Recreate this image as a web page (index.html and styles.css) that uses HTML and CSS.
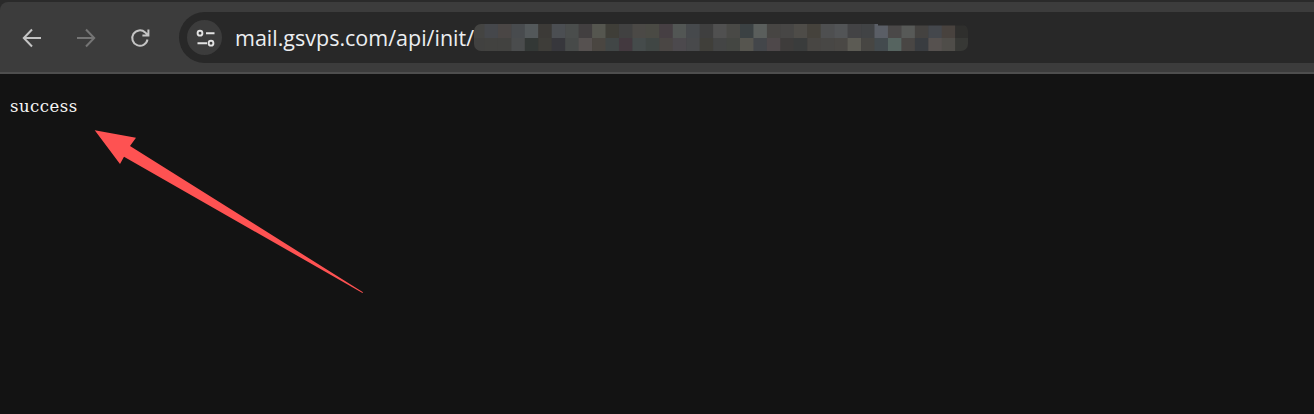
FILE: index.html
```html
<!DOCTYPE html>
<html lang="en">
<head>
<meta charset="utf-8">
<title>success</title>
<link rel="stylesheet" href="styles.css">
</head>
<body>
<header class="chrome">
  <div class="toolbar">
    <nav class="nav">
      <svg class="nav-icon back" viewBox="0 0 20 20"><path d="M19 10H2.5M10 1.5L1.8 10l8.2 8.5"/></svg>
      <svg class="nav-icon forward" viewBox="0 0 20 20"><path d="M1 10H17.5M10 1.5L18.2 10 10 18.5"/></svg>
      <svg class="nav-icon reload" viewBox="0 0 20 20"><path d="M17.5 11.5A7.7 7.7 0 1 1 15.2 4.4L18 7.2M18.4 1.6V7.6H12.4"/></svg>
    </nav>
    <div class="omnibox">
      <span class="tune">
        <svg viewBox="0 0 20 20"><circle cx="5" cy="5.2" r="2.4"/><path d="M11 5.2H19.5M2.5 15.2H12"/><circle cx="16" cy="15.2" r="2.4"/></svg>
      </span>
      <span class="url">mail.gsvps.com/api/init/</span>
      <svg class="mosaic" viewBox="0 0 497 27" aria-hidden="true">
        <defs><clipPath id="mosaic-clip"><rect x="3" y="0" width="494" height="27" rx="7"/></clipPath></defs>
        <g clip-path="url(#mosaic-clip)">
          <g class="top-row">
            <rect x="0" y="0" width="14" height="14" fill="#444442"/><rect x="13.45" y="0" width="14" height="14" fill="#45474b"/><rect x="26.9" y="0" width="14" height="14" fill="#4a4645"/><rect x="40.35" y="0" width="14" height="14" fill="#484b4e"/><rect x="53.8" y="0" width="14" height="14" fill="#53585a"/><rect x="67.25" y="0" width="14" height="14" fill="#3c3a37"/><rect x="80.7" y="0" width="14" height="14" fill="#4b4e52"/><rect x="94.15" y="0" width="14" height="14" fill="#4a4d4c"/><rect x="107.6" y="0" width="14" height="14" fill="#423f40"/><rect x="121.05" y="0" width="14" height="14" fill="#55564f"/><rect x="134.5" y="0" width="14" height="14" fill="#3f3e38"/><rect x="147.95" y="0" width="14" height="14" fill="#414141"/>
            <rect x="161.4" y="0" width="14" height="14" fill="#4b4946"/><rect x="174.85" y="0" width="14" height="14" fill="#4a4a44"/><rect x="188.3" y="0" width="14" height="14" fill="#463f43"/><rect x="201.75" y="0" width="14" height="14" fill="#525654"/><rect x="215.2" y="0" width="14" height="14" fill="#46494c"/><rect x="228.65" y="0" width="14" height="14" fill="#3f3f3f"/><rect x="242.1" y="0" width="14" height="14" fill="#505050"/><rect x="255.55" y="0" width="14" height="14" fill="#494946"/><rect x="269" y="0" width="14" height="14" fill="#3b4143"/><rect x="282.45" y="0" width="14" height="14" fill="#5a5e5c"/><rect x="295.9" y="0" width="14" height="14" fill="#474543"/><rect x="309.35" y="0" width="14" height="14" fill="#474645"/><rect x="322.8" y="0" width="14" height="14" fill="#4e4c48"/>
            <rect x="336.25" y="0" width="14" height="14" fill="#45423c"/><rect x="349.7" y="0" width="14" height="14" fill="#4e4f50"/><rect x="363.15" y="0" width="14" height="14" fill="#525456"/><rect x="376.6" y="0" width="14" height="14" fill="#434345"/><rect x="390.05" y="0" width="14" height="14" fill="#414345"/><rect x="403.5" y="0" width="14" height="14" fill="#5a5e66"/><rect x="416.95" y="0" width="14" height="14" fill="#4a4848"/><rect x="430.4" y="0" width="14" height="14" fill="#575957"/><rect x="443.85" y="0" width="14" height="14" fill="#444240"/><rect x="457.3" y="0" width="14" height="14" fill="#44474c"/><rect x="470.75" y="0" width="14" height="14" fill="#48423e"/><rect x="484.2" y="0" width="13" height="14" fill="#2f2f2d"/>
          </g>
          <g class="bottom-row">
            <rect x="0" y="14" width="14" height="13" fill="#414140"/><rect x="13.45" y="14" width="14" height="13" fill="#424240"/><rect x="26.9" y="14" width="14" height="13" fill="#424240"/><rect x="40.35" y="14" width="14" height="13" fill="#4a4c4d"/><rect x="53.8" y="14" width="14" height="13" fill="#333836"/><rect x="67.25" y="14" width="14" height="13" fill="#3e3d39"/><rect x="80.7" y="14" width="14" height="13" fill="#37373c"/><rect x="94.15" y="14" width="14" height="13" fill="#474a49"/><rect x="107.6" y="14" width="14" height="13" fill="#565150"/><rect x="121.05" y="14" width="14" height="13" fill="#4a4641"/><rect x="134.5" y="14" width="14" height="13" fill="#414646"/><rect x="147.95" y="14" width="14" height="13" fill="#43393f"/>
            <rect x="161.4" y="14" width="14" height="13" fill="#454b4b"/><rect x="174.85" y="14" width="14" height="13" fill="#404644"/><rect x="188.3" y="14" width="14" height="13" fill="#4a4644"/><rect x="201.75" y="14" width="14" height="13" fill="#4c494d"/><rect x="215.2" y="14" width="14" height="13" fill="#48494b"/><rect x="228.65" y="14" width="14" height="13" fill="#403f3a"/><rect x="242.1" y="14" width="14" height="13" fill="#444545"/><rect x="255.55" y="14" width="14" height="13" fill="#444642"/><rect x="269" y="14" width="14" height="13" fill="#56554f"/><rect x="282.45" y="14" width="14" height="13" fill="#43464a"/><rect x="295.9" y="14" width="14" height="13" fill="#4e484a"/><rect x="309.35" y="14" width="14" height="13" fill="#3e3c3b"/><rect x="322.8" y="14" width="14" height="13" fill="#3a3c3c"/>
            <rect x="336.25" y="14" width="14" height="13" fill="#484643"/><rect x="349.7" y="14" width="14" height="13" fill="#484745"/><rect x="363.15" y="14" width="14" height="13" fill="#4a4845"/><rect x="376.6" y="14" width="14" height="13" fill="#5c5b54"/><rect x="390.05" y="14" width="14" height="13" fill="#474643"/><rect x="403.5" y="14" width="14" height="13" fill="#434a4e"/><rect x="416.95" y="14" width="14" height="13" fill="#566460"/><rect x="430.4" y="14" width="14" height="13" fill="#494644"/><rect x="443.85" y="14" width="14" height="13" fill="#393c40"/><rect x="457.3" y="14" width="14" height="13" fill="#56514f"/><rect x="470.75" y="14" width="14" height="13" fill="#4f4d49"/><rect x="484.2" y="14" width="13" height="13" fill="#373835"/>
          </g>
          <rect x="407" y="0" width="90" height="1.5" fill="#282828"/>
        </g>
      </svg>
    </div>
  </div>
</header>
<main class="page">
  <pre class="result">success</pre>
  <svg class="arrow" viewBox="0 120 380 200" aria-hidden="true"><polygon points="94.7,130.3 136,137.7 130,146 363,292.2 362.5,293 124,156.7 120,164"/></svg>
</main>
</body>
</html>
```
FILE: styles.css
```css
html, body { margin: 0; padding: 0; height: 100%; overflow: hidden; background: #131313; }
body { width: 1314px; height: 414px; }
.chrome { height: 74px; padding-top: 2px; box-sizing: border-box; background: #2a2a2a; }
.toolbar { box-sizing: border-box; height: 72px; display: flex; align-items: flex-start; background: #3c3c3c; border-bottom: 2px solid #4e4e4e; border-top-left-radius: 8px; padding-top: 10px; }
.nav { display: flex; align-items: center; gap: 34px; height: 51px; padding-left: 22px; width: 179px; box-sizing: border-box; flex: none; }
.nav-icon { width: 20px; height: 20px; fill: none; stroke-width: 2; }
.back { stroke: #c4c4c4; }
.forward { stroke: #757575; }
.reload { stroke: #c4c4c4; }
.omnibox { flex: 1; height: 51px; display: flex; align-items: center; background: #282828; border-radius: 26px 0 0 26px; padding-left: 8px; position: relative; }
.tune { width: 35px; height: 35px; border-radius: 50%; background: #3c3c3c; display: flex; align-items: center; justify-content: center; flex: none; }
.tune svg { width: 20px; height: 20px; fill: none; stroke: #e3e3e3; stroke-width: 1.9; }
.url { margin-left: 13px; font: 500 21.5px/1 "Open Sans", sans-serif; color: #eceef1; white-space: nowrap; }
.mosaic { position: absolute; left: 292px; top: 12px; width: 497px; height: 27px; }
.page { position: relative; height: 340px; }
.result { margin: 0; padding: 22px 0 0 10px; font: 16.5px/22px "DejaVu Serif", serif; letter-spacing: 0.5px; color: #f6f6f6; }
.arrow { position: absolute; left: 0; top: 46px; width: 380px; height: 200px; }
.arrow polygon { fill: #fe5252; }
```
